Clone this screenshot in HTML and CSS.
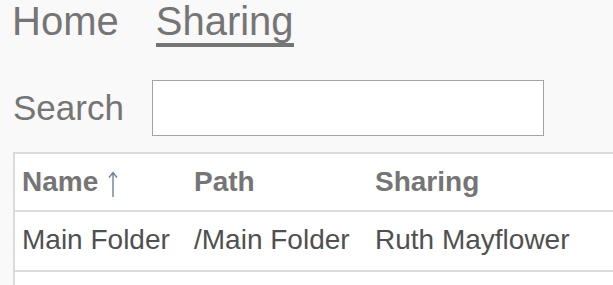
FILE: index.html
```html
<!DOCTYPE html>
<html lang="en">
    <head>
        <title>Sharing</title>
        <meta charset="UTF-8">
        <link rel="stylesheet" href="styles.css">
    </head>
    <body>

        <div class="container">

            <nav class="menu">
                <a href="#" class="menu-link">Home</a>
                <a href="#" class="menu-link menu-link-active">Sharing</a>
            </nav>

            <form action="#" class="search" onsubmit="onSubmit(event)">
                <label for="input_search" class="search-label">Search</label>
                <input type="text" id="input_search" class="search-input">
            </form>

            <table class="table">
                <colgroup>
                    <col class="col-name">
                    <col class="col-path">
                    <col>
                </colgroup>
                <thead>
                    <tr class="trow-head">
                        <th>Name <svg class="sort-arrow" width="10" height="26" viewBox="0 0 10 26"><path d="M5 1.5 V26 M1 6.5 L5 1.5 L9 6.5" fill="none" stroke="#6f7f95" stroke-width="1.4"/></svg></th>
                        <th>Path</th>
                        <th>Sharing</th>
                    </tr>
                </thead>
                <tbody id="table-body">
                    <tr>
                        <td>Main Folder</td>
                        <td>/Main Folder</td>
                        <td>Ruth Mayflower</td>
                    </tr>
                    <tr class="trow-empty">
                        <td></td>
                        <td></td>
                        <td></td>
                    </tr>
                </tbody>
            </table>

        </div>

        <script>
            // evita o refresh da pagina
            function onSubmit(event) {
                event.preventDefault();
            }
        </script>
    </body>
</html>
```

FILE: styles.css
```css
body{
    margin: 0;
    overflow: hidden;
    background-color: #f9f9f9;
    font-family: "Liberation Sans", Arial, sans-serif;
    color: #757575;
}

.container{
    padding: 1px 0 0 12px;
}

/* menu do topo */
.menu{
    display: flex;
    gap: 37px;
}

.menu-link{
    display: inline-block;
    font-size: 40px;
    line-height: 40px;
    padding-bottom: 2px;
    border-bottom: 4px solid transparent;
    color: #757575;
    text-decoration: none;
}

.menu-link-active{
    border-bottom-color: #757575;
}

/* busca */
.search{
    margin-top: 33px;
    padding-left: 1px;

    display: flex;
    align-items: center;
    gap: 28px;
}

.search-label{
    font-size: 35px;
}

.search-input{
    box-sizing: border-box;
    width: 392px;
    height: 56px;
    margin: 0;
    padding: 0 8px;
    border: 1px solid #a3a3a3;
    background-color: white;
    font-size: 24px;
    font-family: inherit;
}

.search-input:focus{
    outline: none;
}

/* tabela */
.table{
    margin-top: 16px;
    margin-left: 1px;
    width: 600px;
    table-layout: fixed;
    border-collapse: separate;
    border-spacing: 0;
    border-top: 2px solid #dcdcdc;
    border-left: 2px solid #dcdcdc;
    background-color: white;
    font-size: 28px;
}

.col-name{
    width: 172px;
}

.col-path{
    width: 181px;
}

.trow-head th{
    text-align: left;
    font-weight: bold;
    color: #757575;
    padding: 12px 7px;
    border-bottom: 2px solid #dcdcdc;
    white-space: nowrap;
}

.sort-arrow{
    margin-left: 2px;
    vertical-align: -6px;
}

#table-body td{
    color: #505050;
    padding: 12px 7px 14px;
    border-bottom: 2px solid #dcdcdc;
    white-space: nowrap;
}

#table-body .trow-empty td{
    height: 30px;
}
```
